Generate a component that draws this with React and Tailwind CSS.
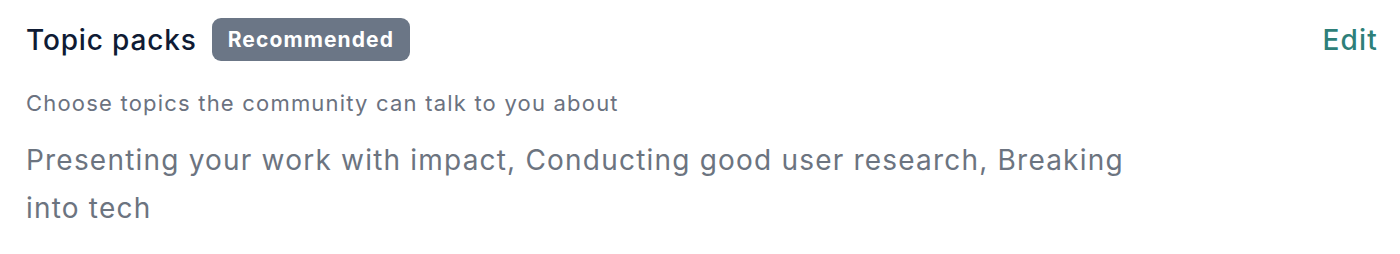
import React from 'react';

const font = { fontFamily: 'Inter, "Noto Sans", sans-serif' };

export default function App() {
  return (
    <div className="w-[1400px] h-[254px] bg-white" style={font}>
      <section className="pl-[26px] pr-[22px] pt-[18px]">
        <div className="flex items-center justify-between h-[43px]">
          <div className="flex items-center gap-[15px]">
            <h2 className="text-[28px] leading-none font-medium text-[#0f1b34] tracking-[0.85px]">
              Topic packs
            </h2>
            <span className="inline-flex items-center h-[43px] px-[16px] rounded-[9px] bg-[#6b7686] text-white text-[21px] font-bold tracking-[1.1px]">
              Recommended
            </span>
          </div>
          <button type="button" className="text-[28px] leading-none font-medium text-[#2e7f79] tracking-[1.2px]">
            Edit
          </button>
        </div>
        <p className="mt-[30px] text-[22px] leading-[24px] text-[#6b7280] tracking-[1.2px]">
          Choose topics the community can talk to you about
        </p>
        <p className="mt-[21px] max-w-[1150px] text-[28px] leading-[48px] text-[#6c7480] tracking-[1.2px]">
          Presenting your work with impact, Conducting good user research, Breaking into tech
        </p>
      </section>
    </div>
  );
}
